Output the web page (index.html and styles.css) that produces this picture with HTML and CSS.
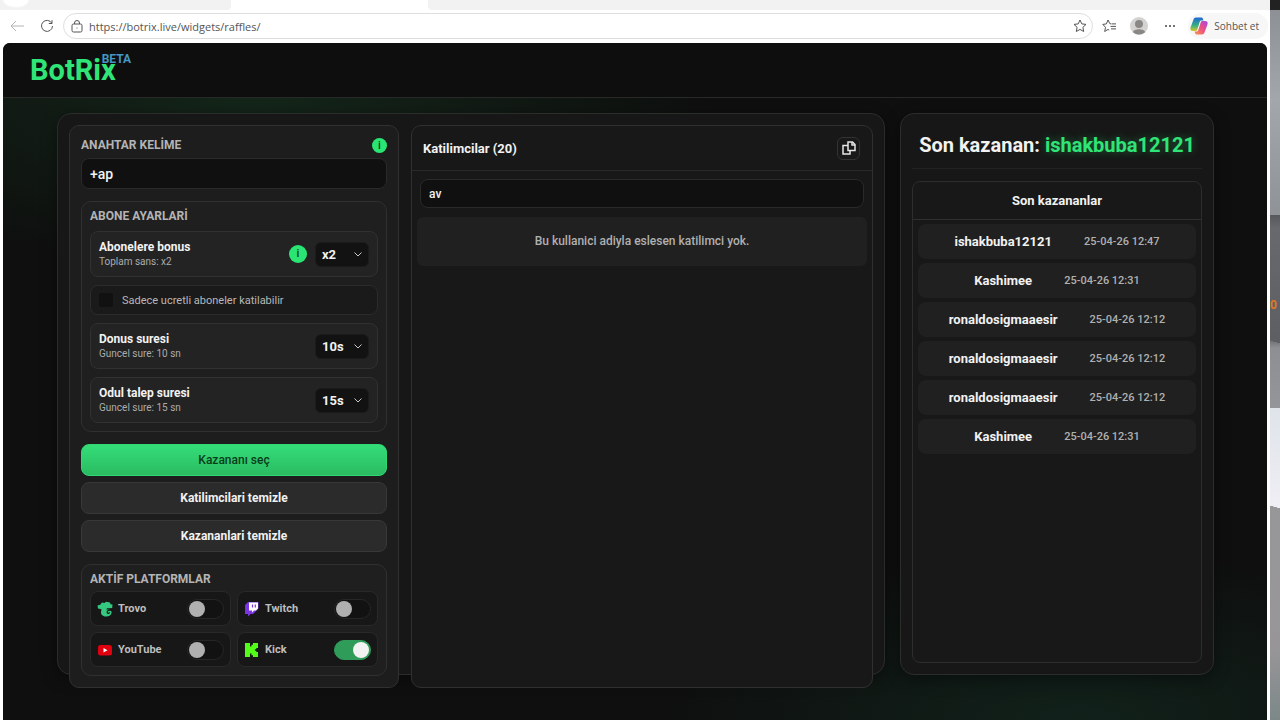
FILE: index.html
```html
<!DOCTYPE html>
<html lang="tr">
<head>
    <meta charset="UTF-8">
    <meta name="viewport" content="width=device-width, initial-scale=1.0">
    <title>BotRix - Raffles</title>
    <link rel="stylesheet" href="styles.css">
</head>
<body>

    <div class="browser">
        <!-- Browser tabs and toolbar -->
        <div class="tab-strip">
            <div class="tab tab-first"></div>
            <div class="tab tab-active"></div>
            <div class="tab tab-rest"></div>
        </div>
        <div class="toolbar">
            <button class="tool" aria-label="Geri">
                <svg width="14" height="12" viewBox="0 0 14 12" fill="none" stroke="#b4b4b4"><path d="M14 6H1M6 1L1 6l5 5"/></svg>
            </button>
            <button class="tool" aria-label="Yenile">
                <svg width="14" height="14" viewBox="0 0 14 14" fill="none" stroke="#555"><path d="M11.800 4.200A5.500 5.500 0 1 0 12.500 7M12 1.200v3.300H8.800"/></svg>
            </button>
            <div class="address">
                <svg width="12" height="13" viewBox="0 0 12 13" fill="none" stroke="#555"><rect x="1" y="4" width="10" height="8" rx="1.5"/><path d="M3.5 4V3a2.5 2.5 0 0 1 5 0v1"/><circle cx="6" cy="8" r=".6" fill="#555" stroke="none"/></svg>
                <input type="text" class="url" aria-label="Adres" value="https://botrix.live/widgets/raffles/">
                <svg width="14" height="14" viewBox="0 0 14 14" fill="none" stroke="#555"><path d="M7 1l1.8 3.9 4.2.5-3.1 2.9.8 4.2L7 10.4l-3.7 2.1.8-4.2L1 5.4l4.2-.5z"/></svg>
            </div>
            <button class="tool" aria-label="Favoriler">
                <svg width="14" height="14" viewBox="0 0 14 14" fill="none" stroke="#555"><path d="M9 4.900L7.800 4.600 6 1 4.400 4.900.8 5.400l2.700 2.900-.8 4.200L6 10.400l1.200.8M9.500 4.900H14M8.500 7.400H14M9 9.900h5"/></svg>
            </button>
            <button class="tool profile" aria-label="Profil">
                <svg width="18" height="18" viewBox="0 0 18 18"><circle cx="9" cy="9" r="9" fill="#d5d3d1"/><circle cx="9" cy="7" r="4" fill="#8a8886"/><path d="M3 15.200c0-4 12-4 12 0A9 9 0 0 1 3 15.200z" fill="#8a8886"/></svg>
            </button>
            <button class="tool more" aria-label="Diğer">
                <svg width="12" height="4" viewBox="0 0 12 4" fill="#444"><circle cx="2" cy="2" r="1"/><circle cx="6" cy="2" r="1"/><circle cx="10" cy="2" r="1"/></svg>
            </button>
            <button class="copilot">
                <svg width="18" height="18" viewBox="0 0 18 18">
                    <defs>
                        <linearGradient id="cool" x1="0" y1="1" x2="0" y2="0"><stop offset="0" stop-color="#d9c52c"/><stop offset=".4" stop-color="#39b27c"/><stop offset="1" stop-color="#1c66d8"/></linearGradient>
                        <linearGradient id="warm" x1="1" y1="0" x2="0" y2="1"><stop offset="0" stop-color="#a347e0"/><stop offset=".5" stop-color="#ee4f83"/><stop offset="1" stop-color="#f59a4b"/></linearGradient>
                    </defs>
                    <path d="M13.500 3.500L13 2C12.600.8 12 .5 11 .5H6C4.500.5 4 1.200 3.500 2.500L.7 10c-.9 2.500 0 4 2.300 4h2.500c1 0 1.500-.6 2-2L9.500 5.500c.5-1.500 1-2 2-2z" fill="url(#cool)"/>
                    <path d="M4.500 14.500L5 16c.4 1.200 1 1.500 2 1.500h5c1.500 0 2-.7 2.500-2L17.300 8c.9-2.500 0-4-2.300-4h-2.500c-1 0-1.500.6-2 2L8.500 12.500c-.5 1.500-1 2-2 2z" fill="url(#warm)"/>
                </svg>
                Sohbet et
            </button>
        </div>

        <!-- Site -->
        <div class="site">
            <header class="site-header">
                <a href="#" class="logo">BotRix<span class="beta">BETA</span></a>
            </header>

            <main class="content">
                <section class="panel raffle">
                    <!-- Settings column -->
                    <div class="settings">
                        <div class="field-head">
                            <label for="keyword" class="caption">ANAHTAR KELİME</label>
                            <button class="info info-small" aria-label="Bilgi">i</button>
                        </div>
                        <input type="text" id="keyword" class="text-input" value="+ap">

                        <div class="group">
                            <h3 class="caption">ABONE AYARLARİ</h3>
                            <div class="option">
                                <div class="option-text">
                                    <label for="bonus">Abonelere bonus</label>
                                    <small>Toplam sans: x2</small>
                                </div>
                                <button class="info" aria-label="Bilgi">i</button>
                                <div class="select-wrap">
                                    <select id="bonus"><option>x2</option><option>x3</option></select>
                                    <svg width="8" height="5" viewBox="0 0 8 5"><path d="M.5.5L4 4 7.500.5"/></svg>
                                </div>
                            </div>
                            <label class="check-row">
                                <input type="checkbox" class="check">
                                Sadece ucretli aboneler katilabilir
                            </label>
                            <div class="option">
                                <div class="option-text">
                                    <label for="spin">Donus suresi</label>
                                    <small>Guncel sure: 10 sn</small>
                                </div>
                                <div class="select-wrap">
                                    <select id="spin"><option>10s</option><option>15s</option></select>
                                    <svg width="8" height="5" viewBox="0 0 8 5"><path d="M.5.5L4 4 7.500.5"/></svg>
                                </div>
                            </div>
                            <div class="option">
                                <div class="option-text">
                                    <label for="claim">Odul talep suresi</label>
                                    <small>Guncel sure: 15 sn</small>
                                </div>
                                <div class="select-wrap">
                                    <select id="claim"><option>15s</option><option>30s</option></select>
                                    <svg width="8" height="5" viewBox="0 0 8 5"><path d="M.5.5L4 4 7.500.5"/></svg>
                                </div>
                            </div>
                        </div>

                        <div class="actions">
                            <button class="btn btn-primary">Kazananı seç</button>
                            <button class="btn">Katilimcilari temizle</button>
                            <button class="btn">Kazananlari temizle</button>
                        </div>

                        <div class="group platforms">
                            <h3 class="caption">AKTİF PLATFORMLAR</h3>
                            <div class="platform-grid">
                                <label class="platform">
                                    <svg width="16" height="16" viewBox="0 0 16 16"><path d="M5 1.500L7.500 2 9 .8l4 .7.500 1.700 2 .3-.3 3.500-2.700.3-2.500-.1-.7 1.300C12 8 14.800 9 14.600 11.500 14.400 14 12 15.500 9.200 15.500 6 15.500 3.800 13.800 4 11l.5-2.700L1 7.500.5 4.500l2.700-.7z" fill="#35c980"/><path d="M14.500 9.300c-2.500-.6-4.700.5-4.300 2.200.4 1.300 2.200 1.100 2.300-.2" fill="none" stroke="#181818" stroke-width="1.200"/></svg>
                                    <span>Trovo</span>
                                    <input type="checkbox" class="toggle">
                                </label>
                                <label class="platform">
                                    <svg width="16" height="16" viewBox="0 0 16 16"><path d="M4 1L1 4v9h3v2.500L6.500 13H9l5.500-5.500V1z" fill="#7a35e0"/><path d="M5 1.500h9v6L12 9.500h-2L8 11.500v-2H5z" fill="#fff"/><path d="M8.500 3.500v3M11.300 3.500v3" stroke="#7a35e0" stroke-width="1.200"/></svg>
                                    <span>Twitch</span>
                                    <input type="checkbox" class="toggle">
                                </label>
                                <label class="platform">
                                    <svg width="16" height="16" viewBox="0 0 16 16"><rect x="1" y="3" width="14" height="10.500" rx="2.500" fill="#e0000f"/><path d="M6.500 6v4.500l4-2.250z" fill="#fff"/></svg>
                                    <span>YouTube</span>
                                    <input type="checkbox" class="toggle">
                                </label>
                                <label class="platform">
                                    <svg width="16" height="16" viewBox="0 0 16 16"><path d="M1 1h5v3.500h1.500V2.800H9V1h5v5h-1.700v1.200h-1.400v1.600h1.400V10H14v5H9v-1.800H7.500v-1.700H6V15H1z" fill="#53fc18"/></svg>
                                    <span>Kick</span>
                                    <input type="checkbox" class="toggle" checked>
                                </label>
                            </div>
                        </div>
                    </div>

                    <!-- Participants column -->
                    <div class="participants">
                        <div class="participants-head">
                            <h2>Katilimcilar (20)</h2>
                            <button class="copy" aria-label="Kopyala">
                                <svg width="14" height="14" viewBox="0 0 14 14" fill="none" stroke="#e6e6e6" stroke-width="1.500"><path d="M6 1h4.500L13 3.500V9.500H6z"/><path d="M10 1v3h3M6 4.500H1V13h7V9.500"/></svg>
                            </button>
                        </div>
                        <div class="participants-body">
                            <input type="text" class="text-input search" aria-label="Ara" value="av">
                            <p class="empty">Bu kullanici adiyla eslesen katilimci yok.</p>
                        </div>
                    </div>
                </section>

                <!-- Winners -->
                <section class="panel winners">
                    <h1>Son kazanan: <span>ishakbuba12121</span></h1>
                    <div class="winners-card">
                        <h2>Son kazananlar</h2>
                        <ul>
                            <li><b>ishakbuba12121</b><time>25-04-26 12:47</time></li>
                            <li><b>Kashimee</b><time>25-04-26 12:31</time></li>
                            <li><b>ronaldosigmaaesir</b><time>25-04-26 12:12</time></li>
                            <li><b>ronaldosigmaaesir</b><time>25-04-26 12:12</time></li>
                            <li><b>ronaldosigmaaesir</b><time>25-04-26 12:12</time></li>
                            <li><b>Kashimee</b><time>25-04-26 12:31</time></li>
                        </ul>
                    </div>
                </section>
            </main>
        </div>
    </div>

    <!-- Desktop behind the window -->
    <div class="desktop"><span>0</span></div>

</body>
</html>
```
FILE: styles.css
```css
/* General Styles */
* {
    box-sizing: border-box;
}

body {
    margin: 0;
    display: flex;
    min-height: 100vh;
    font-family: Roboto, "Liberation Sans", sans-serif;
    color: #f2f2f2;
    background-color: #fff;
}

h1, h2, h3, p, ul {
    margin: 0;
    padding: 0;
}

button, input, select {
    font-family: inherit;
    margin: 0;
}

button {
    cursor: pointer;
}

/* Browser */
.browser {
    flex: 1;
    display: flex;
    flex-direction: column;
    background-color: #fff;
}

.tab-strip {
    display: flex;
    height: 10px;
    background-color: #fff;
}

.tab {
    background-color: #f2f2f2;
}

.tab-first {
    width: 231px;
    border-bottom-right-radius: 4px;
    background-image: radial-gradient(ellipse 14px 8px at 16px 0, #fff 80%, transparent);
}

.tab-active {
    width: 197px;
    background-color: #fff;
}

.tab-rest {
    flex: 1;
    border-bottom-left-radius: 4px;
}

.toolbar {
    display: flex;
    align-items: center;
    height: 33px;
    padding: 0 2px 1px 10px;
    gap: 16px;
}

.tool {
    display: flex;
    padding: 0;
    border: none;
    background: none;
}

.address {
    flex: 1;
    display: flex;
    align-items: center;
    gap: 6px;
    height: 26px;
    margin-left: -7px;
    margin-right: -7px;
    padding: 0 5px 0 7px;
    border: 1px solid #dedede;
    border-radius: 13px;
}

.url {
    flex: 1;
    padding: 0;
    border: none;
    outline: none;
    font-family: "Open Sans", "Noto Sans", sans-serif;
    font-size: 11px;
    color: #555;
    background: none;
}

.profile {
    margin-left: -2px;
}

.more {
    margin-right: -4px;
}

.copilot {
    display: flex;
    align-items: center;
    gap: 6px;
    height: 26px;
    padding: 0 9px 0 2px;
    border: none;
    border-radius: 13px;
    font-family: "Open Sans", "Noto Sans", sans-serif;
    font-size: 10px;
    color: #555;
    background-color: #f7f7f7;
}

/* Site */
.site {
    flex: 1;
    margin: 0 3px;
    border-radius: 7px 7px 0 0;
    overflow: hidden;
    background:
        radial-gradient(ellipse 460px 180px at 20% 50px, #14261a, transparent),
        radial-gradient(ellipse 420px 170px at 85% 100%, #11211a, transparent),
        #0e0f0e;
}

.site-header {
    height: 55px;
    padding: 10px 27px;
    border-bottom: 1px solid #272927;
    background-color: #0d0e0d;
}

.logo {
    display: inline-flex;
    align-items: flex-start;
    font-size: 29px;
    line-height: 34px;
    font-weight: 700;
    color: #2fe577;
    text-decoration: none;
}

.beta {
    margin-left: -14px;
    font-size: 12px;
    line-height: 12px;
    color: #4596c4;
}

.content {
    display: grid;
    grid-template-columns: 828fr 314fr;
    gap: 15px;
    padding: 15px 53px 0 54px;
}

.panel {
    border: 1px solid #2b2d2b;
    border-radius: 14px;
    background-color: #171717;
    box-shadow: 0 4px 16px rgba(0, 0, 0, 0.4);
}

/* Raffle panel, its columns hang a little below the frame */
.raffle {
    display: grid;
    grid-template-columns: 330fr 462fr;
    gap: 12px;
    padding: 11px 11px 0;
}

.settings,
.participants {
    margin-bottom: -14px;
    border: 1px solid #303030;
    border-radius: 10px;
    background-color: #1d1d1d;
}

.settings {
    padding: 11px;
}

.participants {
    background-color: #181818;
}

.caption {
    font-size: 12px;
    line-height: 14px;
    font-weight: 700;
    color: #b4b4b4;
}

.field-head {
    display: flex;
    align-items: center;
    justify-content: space-between;
    height: 16px;
    margin-bottom: 5px;
}

.info {
    width: 18px;
    height: 18px;
    padding: 0;
    border: none;
    border-radius: 50%;
    font-size: 11px;
    line-height: 18px;
    font-weight: 500;
    color: #0b3a1c;
    background-color: #2ae573;
}

.info-small {
    width: 15px;
    height: 15px;
    line-height: 15px;
}

.text-input {
    display: block;
    width: 100%;
    height: 31px;
    padding: 0 8px;
    border: 1px solid #2a2a2a;
    border-radius: 8px;
    font-size: 14px;
    font-weight: 500;
    color: #f2f2f2;
    background-color: #101010;
}

.group {
    display: flex;
    flex-direction: column;
    gap: 8px;
    margin-top: 12px;
    padding: 7px 8px 8px;
    border: 1px solid #303030;
    border-radius: 10px;
    background-color: #1f1f1f;
}

.option {
    display: flex;
    align-items: center;
    gap: 8px;
    height: 46px;
    padding: 0 8px;
    border: 1px solid #313131;
    border-radius: 8px;
    background-color: #232323;
}

.option-text {
    flex: 1;
    display: flex;
    flex-direction: column;
}

.option-text label {
    font-size: 12px;
    line-height: 16px;
    font-weight: 700;
}

.option-text small {
    font-size: 10px;
    line-height: 14px;
    color: #acacac;
}

.select-wrap {
    position: relative;
}

.select-wrap select {
    display: block;
    appearance: none;
    width: 54px;
    height: 25px;
    padding: 0 6px;
    border: 1px solid #1b1b1b;
    border-radius: 6px;
    font-size: 13px;
    font-weight: 700;
    color: #f2f2f2;
    background-color: #121212;
}

.select-wrap svg {
    position: absolute;
    top: 10px;
    right: 7px;
    fill: none;
    stroke: #c8c8c8;
    pointer-events: none;
}

.check-row {
    display: flex;
    align-items: center;
    gap: 9px;
    height: 30px;
    padding: 0 8px;
    border: 1px solid #2b2b2b;
    border-radius: 8px;
    font-size: 11px;
    color: #b8b8b8;
    background-color: #1a1a1a;
}

.check {
    appearance: none;
    width: 14px;
    height: 14px;
    border-radius: 2px;
    background-color: #111;
}

.actions {
    display: flex;
    flex-direction: column;
    gap: 6px;
    margin-top: 12px;
}

.btn {
    height: 32px;
    border: 1px solid #383838;
    border-radius: 8px;
    font-size: 12px;
    font-weight: 700;
    color: #f2f2f2;
    background-color: #2b2b2b;
}

.btn-primary {
    border-color: #2fd873;
    font-weight: 500;
    color: #083d1b;
    background: linear-gradient(#34dd78, #2bbb62);
}

/* Platforms */
.platforms {
    gap: 5px;
}

.platform-grid {
    display: grid;
    grid-template-columns: 1fr 1fr;
    gap: 6px;
}

.platform {
    display: flex;
    align-items: center;
    gap: 5px;
    height: 35px;
    padding: 0 6px;
    border: 1px solid #292929;
    border-radius: 8px;
    font-size: 11px;
    font-weight: 700;
    color: #bebebe;
    background-color: #171717;
}

.platform span {
    flex: 1;
}

.toggle {
    appearance: none;
    display: flex;
    align-items: center;
    width: 37px;
    height: 20px;
    padding: 1px;
    border: 1px solid #262626;
    border-radius: 10px;
    background-color: #121212;
}

.toggle::before {
    content: "";
    width: 16px;
    height: 16px;
    border-radius: 50%;
    background-color: #b0b0b0;
}

.toggle:checked {
    justify-content: flex-end;
    border-color: #2f9c5a;
    background-color: #2f9c5a;
}

.toggle:checked::before {
    background-color: #f2f2f2;
}

/* Participants */
.participants-head {
    display: flex;
    align-items: center;
    justify-content: space-between;
    height: 45px;
    padding: 0 12px 0 11px;
    border-bottom: 1px solid #292929;
}

.participants-head h2 {
    font-size: 13px;
    font-weight: 700;
}

.copy {
    display: flex;
    align-items: center;
    justify-content: center;
    width: 23px;
    height: 23px;
    padding: 0;
    border: 1px solid #333;
    border-radius: 6px;
    background-color: #191919;
}

.participants-body {
    padding: 8px 5px;
}

.search {
    width: auto;
    min-width: calc(100% - 6px);
    height: 29px;
    margin: 0 3px 9px;
    font-size: 12px;
}

.empty {
    padding: 16px;
    border-radius: 6px;
    font-size: 12px;
    line-height: 17px;
    font-weight: 500;
    text-align: center;
    color: #b0b0b0;
    background-color: #202020;
}

/* Winners */
.winners {
    display: flex;
    flex-direction: column;
    gap: 12px;
    padding: 11px;
}

.winners h1 {
    height: 44px;
    border-bottom: 1px solid #222;
    font-size: 20px;
    line-height: 41px;
    font-weight: 700;
    text-align: center;
    white-space: nowrap;
}

.winners h1 span {
    color: #2fe577;
    text-shadow: 0 0 10px rgba(47, 229, 119, 0.4);
}

.winners-card {
    flex: 1;
    border: 1px solid #2d2d2d;
    border-radius: 8px;
    background-color: #181818;
}

.winners-card h2 {
    height: 38px;
    border-bottom: 1px solid #2f2f2f;
    font-size: 13px;
    line-height: 38px;
    font-weight: 700;
    text-align: center;
}

.winners-card ul {
    display: flex;
    flex-direction: column;
    gap: 4px;
    padding: 4px 5px;
    list-style: none;
}

.winners-card li {
    display: flex;
    align-items: center;
    justify-content: center;
    gap: 32px;
    height: 35px;
    border-radius: 8px;
    background-color: #202020;
}

.winners-card b {
    font-size: 13px;
    font-weight: 700;
}

.winners-card time {
    font-size: 11px;
    font-weight: 500;
    color: #b0b0b0;
}

/* Desktop */
.desktop {
    width: 10px;
    padding-top: 298px;
    overflow: hidden;
    font-size: 12px;
    line-height: 14px;
    font-weight: 700;
    color: #e0781e;
    background:
        linear-gradient(15deg, transparent 50%, #5d5f63 51%) 0 336px / 10px 12px no-repeat,
        linear-gradient(15deg, #97979a 50%, #eeeef4 51%) 0 500px / 10px 14px no-repeat,
        linear-gradient(#222 10px, #8d9196 10px, #a3a6aa 100px, #8f9296 215px, #56585c 215px, #67696d 228px, #5d5f63 336px, #8d8f93 348px, #939598 408px, #dfe3ea 408px, #eeeef4 500px, #97979a 514px, #979598 650px, #7c8888 720px);
}
```
